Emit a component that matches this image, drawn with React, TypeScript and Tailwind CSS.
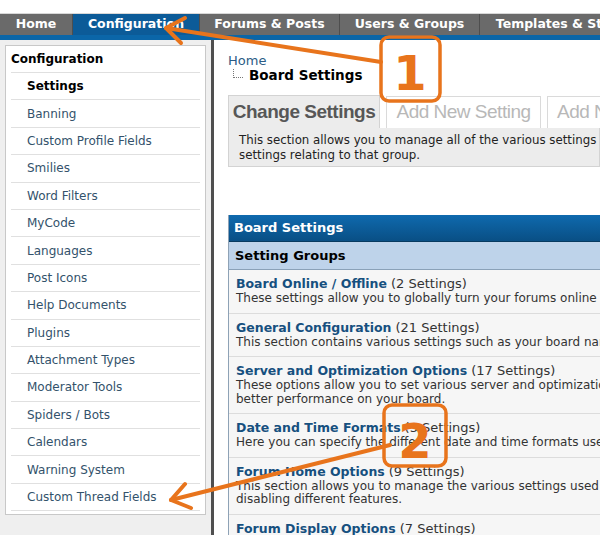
import React from 'react';

type NavTab = { label: string; width: string; active?: boolean };

const NAV_TABS: NavTab[] = [
  { label: 'Home', width: 'w-[73px]' },
  { label: 'Configuration', width: 'w-[127px]', active: true },
  { label: 'Forums & Posts', width: 'w-[140px]' },
  { label: 'Users & Groups', width: 'w-[140px]' },
  { label: 'Templates & Style', width: 'w-[160px]' },
];

const MENU_ITEMS = [
  'Banning',
  'Custom Profile Fields',
  'Smilies',
  'Word Filters',
  'MyCode',
  'Languages',
  'Post Icons',
  'Help Documents',
  'Plugins',
  'Attachment Types',
  'Moderator Tools',
  'Spiders / Bots',
  'Calendars',
  'Warning System',
  'Custom Thread Fields',
];

type SettingGroup = { title: string; count: number; lines: string[] };

const GROUPS: SettingGroup[] = [
  {
    title: 'Board Online / Offline',
    count: 2,
    lines: ['These settings allow you to globally turn your forums online or offline, and allow you to specify a reason.'],
  },
  {
    title: 'General Configuration',
    count: 21,
    lines: ['This section contains various settings such as your board name and url, as well as your website name.'],
  },
  {
    title: 'Server and Optimization Options',
    count: 17,
    lines: [
      'These options allow you to set various server and optimization preferences allowing you to reduce load and gain',
      'better performance on your board.',
    ],
  },
  {
    title: 'Date and Time Formats',
    count: 3,
    lines: ['Here you can specify the different date and time formats used to display dates and times on the forums.'],
  },
  {
    title: 'Forum Home Options',
    count: 9,
    lines: [
      'This section allows you to manage the various settings used on the forum home of your boards such as enabling and',
      'disabling different features.',
    ],
  },
  {
    title: 'Forum Display Options',
    count: 7,
    lines: ['This section allows you to manage the various settings used on the forum display of your boards.'],
  },
];

const Sidebar: React.FC = () => (
  <aside className="w-[211px] shrink-0 bg-[#efefef] pl-[5px] pr-[5px] pt-[5px]">
    <div className="bg-white border border-[#c8c8c8] px-[5px] pb-[3px]">
      <div className="h-[27px] flex items-center border-b border-[#e0e0e0] text-[12px] font-bold text-black">
        Configuration
      </div>
      <div className="h-[27.4px] flex items-center pl-[16px] border-b border-[#e0e0e0] text-[12px] font-bold text-black">
        Settings
      </div>
      {MENU_ITEMS.map((item) => (
        <div
          key={item}
          className="h-[27.4px] flex items-center pl-[16px] border-b border-[#e0e0e0] text-[12px] text-[#33526b]"
        >
          {item}
        </div>
      ))}
    </div>
  </aside>
);

const Breadcrumb: React.FC = () => (
  <div className="pt-[13px]">
    <div className="text-[13px] leading-[15px] text-[#2c5c86]">Home</div>
    <div className="flex items-end h-[15px]">
      <span className="ml-[5px] mb-[5px] w-[10px] h-[9px] border-l border-b border-dotted border-[#777]" />
      <span className="ml-[6px] text-[13.5px] leading-[15px] font-bold text-black">Board Settings</span>
    </div>
  </div>
);

const SubTabs: React.FC = () => (
  <div className="mt-[12px]">
    <div className="flex items-end gap-[6px] h-[33px] whitespace-nowrap font-['Liberation_Sans',Arial,sans-serif] text-[19px] tracking-[-0.5px]">
      <div className="shrink-0 h-[33px] w-[152px] flex items-center justify-center bg-[#ececec] border border-b-0 border-[#d3d3d3] font-bold text-[#575757]">
        Change Settings
      </div>
      <div className="shrink-0 h-[32px] w-[155px] flex items-center justify-center bg-white border border-b-0 border-[#dadada] text-[#b8b8b8]">
        Add New Setting
      </div>
      <div className="shrink-0 h-[32px] w-[200px] flex items-center pl-[9px] bg-white border border-b-0 border-[#dadada] text-[#b8b8b8]">
        Add New Setting Group
      </div>
    </div>
    <div className="h-[39px] bg-[#ececec] border border-t-0 border-[#d3d3d3] pl-[10px] pt-[5px] text-[11.8px] leading-[15px] text-[#222] whitespace-nowrap">
      <div>This section allows you to manage all of the various settings pertaining to your board. To begin, select a group below to manage</div>
      <div>settings relating to that group.</div>
    </div>
  </div>
);

const SettingsTable: React.FC = () => (
  <div className="mt-[48px] border-l border-[#8ea2b6]">
    <div className="h-[27px] flex items-center pl-[5px] bg-gradient-to-b from-[#0f6aae] to-[#094f85] border-b border-[#073a60] text-[13px] font-bold text-white">
      Board Settings
    </div>
    <div className="h-[28px] flex items-center pl-[6px] bg-[#bed3ea] border-b border-[#8aa1b8] text-[13px] font-bold text-black">
      Setting Groups
    </div>
    {GROUPS.map((g) => (
      <div key={g.title} className="bg-[#f6f6f6] border-b border-[#dcdcdc] pl-[7px] pt-[6px] pb-[7px] whitespace-nowrap">
        <div className="text-[12.5px] leading-[16px]">
          <span className="font-bold text-[#16507f]">{g.title}</span>{' '}
          <span className="text-[#333] text-[13px]">({g.count} Settings)</span>
        </div>
        {g.lines.map((line) => (
          <div key={line} className="text-[12px] leading-[13.5px] text-[#333]">
            {line}
          </div>
        ))}
      </div>
    ))}
  </div>
);

// orange callouts drawn over the page
const Callouts: React.FC = () => (
  <svg className="absolute inset-0 pointer-events-none" width="600" height="535" viewBox="0 0 600 535">
    <g stroke="#e8741c" strokeWidth="4" strokeLinecap="round" strokeLinejoin="round" fill="none">
      <line x1="381" y1="62" x2="166" y2="28" />
      <polyline points="185,18 166,28 181,43" />
      <line x1="390" y1="445" x2="171" y2="500" />
      <polyline points="185,484 171,500 191,508" />
      <rect x="381" y="37" width="59" height="64" rx="8" strokeWidth="3.5" />
      <rect x="384" y="405" width="62" height="61" rx="8" strokeWidth="3.5" />
    </g>
    <text
      x="410"
      y="90"
      textAnchor="middle"
      fill="#e8741c"
      fontFamily="DejaVu Sans, sans-serif"
      fontWeight="bold"
      fontSize="48"
    >
      1
    </text>
    <text
      x="415"
      y="458"
      textAnchor="middle"
      fill="#e8741c"
      fontFamily="DejaVu Sans, sans-serif"
      fontWeight="bold"
      fontSize="48"
    >
      2
    </text>
  </svg>
);

export default function App() {
  return (
    <div className="relative w-[600px] h-[535px] overflow-hidden bg-white font-['DejaVu_Sans',Verdana,sans-serif]">
      <div className="h-[14px] bg-white border-b border-[#d8d8d8]" />
      <nav className="flex h-[21px] bg-[#6a6a6a]">
        {NAV_TABS.map((tab) => (
          <div
            key={tab.label}
            className={`${tab.width} shrink-0 flex items-center justify-center whitespace-nowrap text-[12.5px] font-bold text-white border-r border-[#4e4e4e] ${
              tab.active ? 'bg-[#0c5b98]' : 'bg-[#6a6a6a]'
            }`}
          >
            {tab.label}
          </div>
        ))}
      </nav>
      <div className="h-[5px] bg-[#0b66a8]" />
      <div className="flex h-[495px]">
        <Sidebar />
        <div className="w-[3px] shrink-0 bg-[#4f4f4f]" />
        <main className="flex-1 min-w-0 pl-[14px] overflow-hidden">
          <Breadcrumb />
          <SubTabs />
          <SettingsTable />
        </main>
      </div>
      <Callouts />
    </div>
  );
}
